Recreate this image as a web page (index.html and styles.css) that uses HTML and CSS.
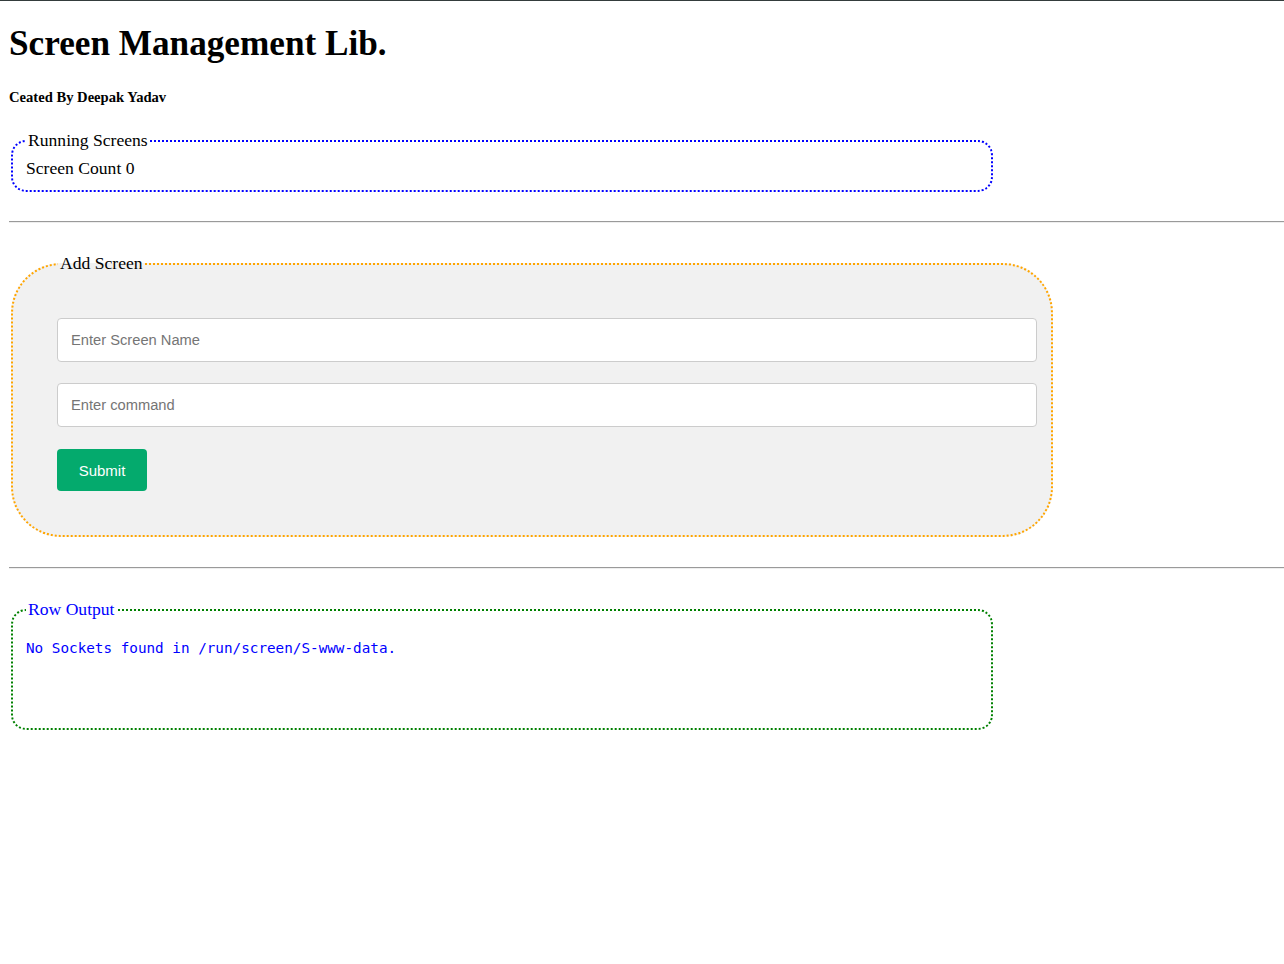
FILE: index.html
```html
<!DOCTYPE html>
<html>
<head>
<meta charset="utf-8">
<link rel="stylesheet" href="styles.css">
</head>
<body>
<h1 class="title">Screen Management Lib.</h1>
<h4 class="author">Ceated By Deepak Yadav</h4>
<fieldset class="box box-running">
  <legend class="legend">Running Screens</legend>
  <div class="count">Screen Count 0</div>
</fieldset>
<div class="rule"></div>
<fieldset class="box box-add">
  <legend class="legend legend-add">Add Screen</legend>
  <form class="form">
    <input class="field" type="text" placeholder="Enter Screen Name">
    <input class="field" type="text" placeholder="Enter command">
    <button class="submit" type="button">Submit</button>
  </form>
</fieldset>
<div class="rule rule-second"></div>
<fieldset class="box box-output">
  <legend class="legend legend-output">Row Output</legend>
  <pre class="output">No Sockets found in /run/screen/S-www-data.</pre>
</fieldset>
</body>
</html>
```

FILE: styles.css
```css
html {
  border-top: 1px solid #343c3c;
}
body {
  margin: 8px 0 8px 8px;
  font-family: "Liberation Serif", "Times New Roman", serif;
  color: #000;
  background: #fff;
}
.title {
  font-size: 35.2px;
  margin: 14px 0 0 1px;
  line-height: 42px;
}
.author {
  font-size: 14.6px;
  margin: 23px 0 0 1px;
  line-height: 18px;
}
.box {
  box-sizing: border-box;
  margin: 24px 0 0 3px;
  border-radius: 15px;
  min-inline-size: 0;
}
.legend {
  font-size: 17.6px;
  padding: 0 2px;
  margin-left: 0;
}
.box-running {
  width: 982px;
  border: 2px dotted #0000ff;
  padding: 7px 13px 12px;
}
.count {
  font-size: 17.6px;
  line-height: 20px;
}
.rule {
  margin: 29px 0 0 1px;
  border-top: 1px solid #9a9a9a;
  border-bottom: 1px solid #eeeeee;
  height: 0;
}
.rule-second {
  margin-top: 30px;
}
.box-add {
  width: 1042px;
  margin-top: 30px;
  border: 2px dotted #ffa500;
  border-radius: 50px;
  background: #f1f1f1;
  padding: 0 14px 44px 44px;
}
.legend-add {
  margin-left: 1px;
}
.form {
  display: flex;
  flex-direction: column;
  align-items: flex-start;
  gap: 21px;
  padding-top: 44px;
}
.field {
  box-sizing: border-box;
  width: 100%;
  height: 44px;
  margin: 0;
  padding: 0 13px;
  border: 1px solid #cccccc;
  border-radius: 4px;
  background: #fff;
  font-family: "Liberation Sans", Arial, sans-serif;
  font-size: 14.7px;
  color: #333;
}
.field::placeholder {
  color: #757575;
}
.submit {
  width: 90px;
  height: 42px;
  margin-top: 1px;
  border: none;
  border-radius: 4px;
  background: #04aa6d;
  color: #fff;
  font-family: "Liberation Sans", Arial, sans-serif;
  font-size: 15px;
  padding: 0;
}
.box-output {
  width: 982px;
  margin-top: 30px;
  border: 2px dotted #008000;
  padding: 19px 13px 71px;
}
.legend-output {
  color: #0000ff;
}
.output {
  margin: 0;
  font-family: "DejaVu Sans Mono", monospace;
  font-size: 14.3px;
  line-height: 18px;
  color: #0000ff;
}
```
